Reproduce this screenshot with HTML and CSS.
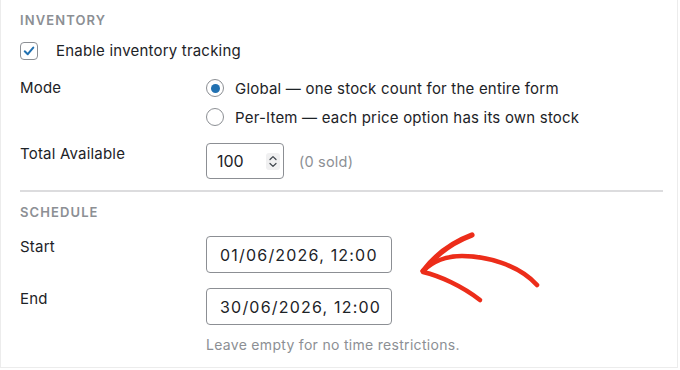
FILE: index.html
```html
<!DOCTYPE html>
<html>
<head>
<meta charset="utf-8">
<link rel="stylesheet" href="styles.css">
</head>
<body>
<div class="card">
  <section class="section">
    <div class="heading">INVENTORY</div>
    <label class="check-row">
      <span class="checkbox">
        <svg width="18" height="18" viewBox="0 0 18 18"><path d="M4.2 9.4 L7.6 12.6 L13.8 5.2" fill="none" stroke="#2271b1" stroke-width="2.3" stroke-linecap="round" stroke-linejoin="round"/></svg>
      </span>
      <span class="check-label">Enable inventory tracking</span>
    </label>
    <div class="row row-mode">
      <div class="label">Mode</div>
      <div class="options">
        <div class="option"><span class="radio checked"></span><span>Global — one stock count for the entire form</span></div>
        <div class="option"><span class="radio"></span><span>Per-Item — each price option has its own stock</span></div>
      </div>
    </div>
    <div class="row row-total">
      <div class="label">Total Available</div>
      <div class="field-inline">
        <div class="number-input">
          <span class="num">100</span>
          <span class="spinner">
            <svg width="14" height="17" viewBox="0 0 14 17"><rect x="0" y="0" width="14" height="17" rx="3" fill="#f0f0f1"/><path d="M4 6.5 L7 3.6 L10 6.5" fill="none" stroke="#3c434a" stroke-width="1.2" stroke-linecap="round" stroke-linejoin="round"/><path d="M4 10.5 L7 13.4 L10 10.5" fill="none" stroke="#3c434a" stroke-width="1.2" stroke-linecap="round" stroke-linejoin="round"/></svg>
          </span>
        </div>
        <span class="sold">(0 sold)</span>
      </div>
    </div>
  </section>
  <hr class="divider">
  <section class="section schedule">
    <div class="heading">SCHEDULE</div>
    <div class="row row-date">
      <div class="label">Start</div>
      <div class="date-input">01/06/2026, 12:00</div>
    </div>
    <div class="row row-date row-end">
      <div class="label">End</div>
      <div class="date-input">30/06/2026, 12:00</div>
    </div>
    <div class="help">Leave empty for no time restrictions.</div>
  </section>
  <svg class="arrow" width="680" height="370" viewBox="0 0 680 370">
    <g fill="none" stroke="#ec2d1a" stroke-linecap="round" stroke-linejoin="round">
      <path d="M423 271 C432 262, 445 256, 462 256 C485 256, 518 264, 537 285" stroke-width="4.6"/>
      <path d="M423 271 C433 258, 448 244, 472 235" stroke-width="5.2"/>
      <path d="M423 272 C440 276, 462 286, 480 300" stroke-width="4.6"/>
    </g>
  </svg>
</div>
</body>
</html>
```

FILE: styles.css
```css
* { box-sizing: border-box; }
html, body { margin: 0; padding: 0; background: #ffffff; }
body {
  font-family: Inter, "Noto Sans", "Liberation Sans", sans-serif;
  color: #1d2327;
  font-size: 15px;
  letter-spacing: 0.2px;
}
.card {
  position: relative;
  width: 678px;
  height: 368px;
  border-left: 1px solid #ececec;
  border-right: 1px solid #ececec;
  border-bottom: 1px solid #ececec;
  padding: 12px 14px 0 19px;
}
.heading {
  height: 16px;
  line-height: 16px;
  font-size: 13px;
  font-weight: 600;
  letter-spacing: 1.1px;
  color: #8c8f94;
}
.check-row {
  display: flex;
  align-items: center;
  margin-top: 14px;
  height: 18px;
}
.checkbox {
  width: 18px;
  height: 18px;
  border: 1px solid #8c8f94;
  border-radius: 4px;
  display: flex;
  align-items: center;
  justify-content: center;
  background: #fff;
}
.checkbox svg { display: block; }
.check-label { margin-left: 18px; line-height: 18px; }
.row {
  display: grid;
  grid-template-columns: 186px 1fr;
}
.label { line-height: 22px; }
.row-mode { margin-top: 16px; }
.row-mode .label { line-height: 24px; }
.options { display: flex; flex-direction: column; gap: 5px; }
.option {
  display: flex;
  align-items: center;
  height: 24px;
  gap: 11px;
}
.radio {
  width: 18px;
  height: 18px;
  border: 1px solid #8c8f94;
  border-radius: 50%;
  background: #fff;
  display: flex;
  align-items: center;
  justify-content: center;
}
.radio.checked::after {
  content: "";
  width: 9px;
  height: 9px;
  border-radius: 50%;
  background: #2271b1;
}
.row-total { margin-top: 14px; }
.field-inline { display: flex; align-items: center; gap: 15px; }
.number-input {
  width: 78px;
  height: 36px;
  border: 1px solid #8c8f94;
  border-radius: 4px;
  display: flex;
  align-items: center;
  justify-content: space-between;
  padding: 0 3px 0 10px;
}
.num { font-size: 16px; letter-spacing: 0; }
.spinner svg { display: block; }
.sold { color: #8c8f94; font-size: 14.5px; }
.divider {
  margin: 11px 0 0 0;
  border: 0;
  border-top: 2px solid #dcdcde;
  height: 0;
}
.schedule { padding-top: 12px; }
.row-date { margin-top: 16px; }
.row-end { margin-top: 15px; }
.date-input {
  width: 186px;
  height: 37px;
  border: 1px solid #8c8f94;
  border-radius: 4px;
  display: flex;
  align-items: center;
  padding-left: 13px;
  font-size: 16px;
  letter-spacing: 1.2px;
}
.help {
  margin: 11px 0 0 186px;
  line-height: 18px;
  font-size: 14px;
  letter-spacing: 0.3px;
  color: #8c8f94;
}
.arrow {
  position: absolute;
  left: -1px;
  top: 0;
  pointer-events: none;
}
```
